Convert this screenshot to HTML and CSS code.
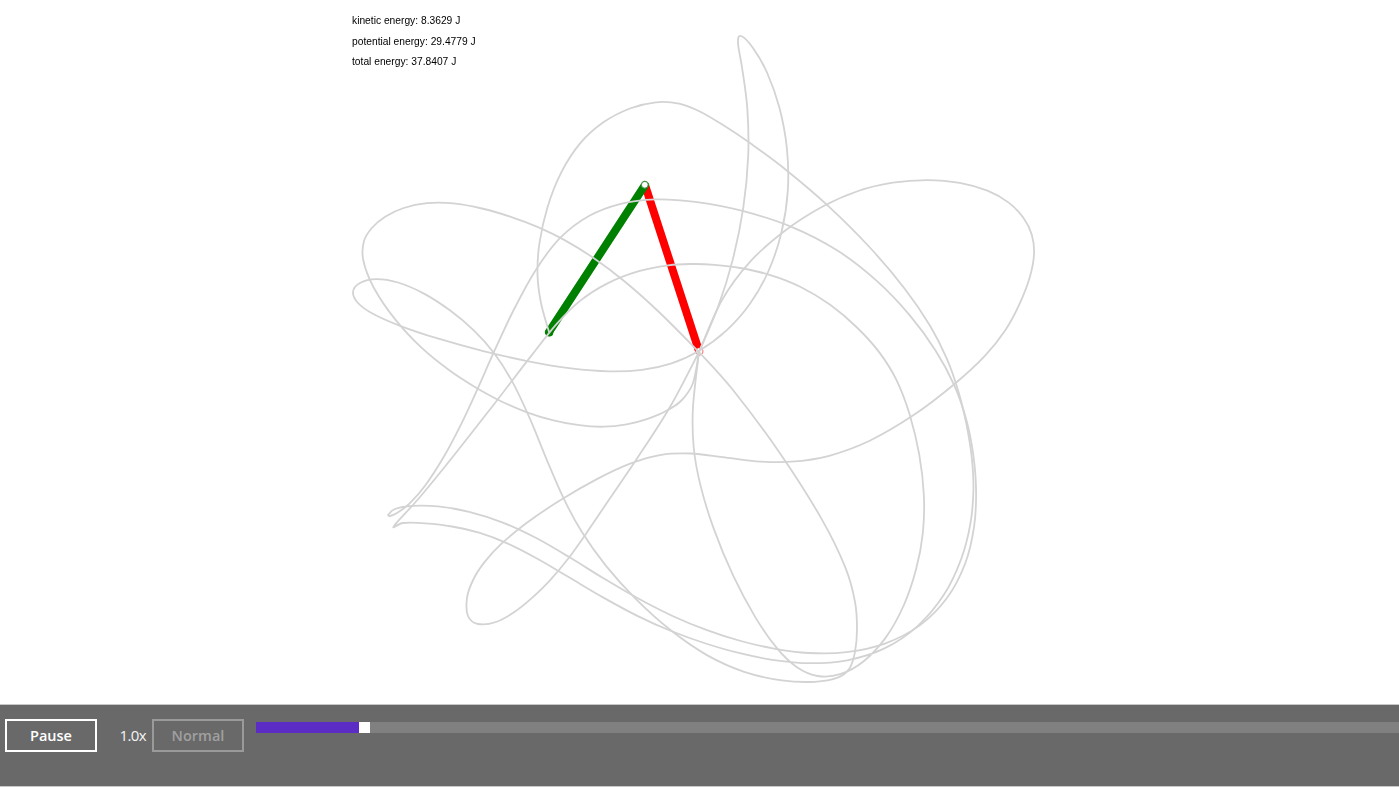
FILE: index.html
```html
<!DOCTYPE html>
<html lang="en">
<head>
<meta charset="utf-8">
<title>Double pendulum</title>
<link rel="stylesheet" href="styles.css">
</head>
<body>
<main class="stage">
  <svg class="scene" viewBox="0 0 1399 704" width="1399" height="704" aria-hidden="true">
    <line class="rod rod-red" x1="645" y1="185" x2="699" y2="351"></line>
    <line class="rod rod-green" x1="645" y1="185" x2="549" y2="332"></line>
    <circle class="tip" cx="549.3" cy="332.5" r="4"></circle>
    <circle class="pivot" cx="699.3" cy="351.5" r="3.6"></circle>
    <g id="trail" class="trail"></g>
    <circle class="joint" cx="644.8" cy="184.8" r="3.4"></circle>
  </svg>
  <div class="energy">
    <p>kinetic energy: 8.3629 J</p>
    <p>potential energy: 29.4779 J</p>
    <p>total energy: 37.8407 J</p>
  </div>
</main>
<footer class="controls">
  <button class="btn btn-on" type="button">Pause</button>
  <span class="speed">1.0x</span>
  <button class="btn btn-off" type="button">Normal</button>
  <div class="slider">
    <div class="slider-fill"></div>
    <div class="slider-thumb"></div>
  </div>
</footer>
<script src="app.js"></script>
</body>
</html>
```
FILE: styles.css
```css
* { box-sizing: border-box; }
html, body { margin: 0; padding: 0; }
body {
  width: 1399px;
  height: 787px;
  overflow: hidden;
  background: #fff;
  display: flex;
  flex-direction: column;
}
.stage {
  position: relative;
  height: 704px;
  flex: none;
  padding: 15px 0 0 352px;
}
.scene {
  position: absolute;
  left: 0;
  top: 0;
  display: block;
  filter: blur(0.3px);
}
.energy {
  position: relative;
  font-family: "Liberation Sans", Arial, sans-serif;
  font-size: 10.25px;
  line-height: 12px;
  color: #000;
  filter: blur(0.3px);
}
.energy p { margin: 0 0 8.5px; }
.trail path {
  fill: none;
  stroke: #d3d3d3;
  stroke-width: 1.8;
  stroke-linejoin: round;
  stroke-linecap: round;
}
.rod { stroke-width: 8; stroke-linecap: round; }
.rod-red { stroke: #ff0000; stroke-linecap: butt; }
.rod-green { stroke: #008000; }
.tip { fill: #008000; }
.pivot { fill: #fff; stroke: #ff5050; stroke-width: 1; stroke-dasharray: 2.5 1.5; }
.joint { fill: #fff; stroke: #3d8f3d; stroke-width: 1; }
.controls {
  flex: none;
  height: 83px;
  background: #696969;
  border-top: 1px solid #c8c8c8;
  border-bottom: 1px solid #c8c8c8;
  display: flex;
  align-items: flex-start;
  padding: 14px 0 0 5px;
  font-family: "Open Sans", "Noto Sans", sans-serif;
}
.btn {
  width: 92px;
  height: 33px;
  margin: 0;
  padding: 0;
  background: transparent;
  font-family: inherit;
  font-size: 14.5px;
  font-weight: 600;
  line-height: 29px;
}
.btn-on { border: 2px solid #fff; color: #fff; }
.btn-off { border: 2px solid #9a9a9a; color: #a0a0a0; }
.speed {
  width: 55px;
  padding-right: 6px;
  text-align: right;
  font-size: 15px;
  font-weight: 400;
  letter-spacing: -0.6px;
  line-height: 33px;
  color: #f4f4f4;
}
.slider {
  flex: 1;
  height: 11px;
  margin: 3px 0 0 12px;
  background: #808080;
  display: flex;
}
.slider-fill { width: 103px; background: #5b2dc4; }
.slider-thumb { width: 11px; background: #fff; }
```
FILE: app.js
```js
var trails = [
  [[549,332],[541,303],[538,273],[539,247],[547,207],[562,170],[580,143],[603,123],[630,108],[657,102],[680,104],[700,111],[723,127],[750,143],[787,170],[827,205],[870,247],[907,290],[930,327],[947,360],[957,387],[967,427],[972,460],[972.5,490],[971,523],[961,560],[944,593],[920,627],[883,650],[847,660],[810,663],[773,660],[740,653],[707,643],[670,632],[637,615],[603,598],[570,578],[537,558],[505,542],[480,533],[453,527],[427,523],[403,523],[394,526],[420,497],[453,457],[497,400],[537,350],[553,327],[580,303],[603,283],[640,270],[673,265],[690,266],[713,264],[740,268],[770,275],[800,287],[830,303],[857,327],[883,360],[893,373],[910,413],[920,457],[924,497],[922,533],[917,567],[903,607],[887,637],[863,663],[840,673],[817,677],[797,667],[777,647],[757,620],[733,577],[713,527],[700,483],[695,447],[693,407],[699,352]],
  [[699,352],[733,390],[787,460],[823,520],[847,573],[853,597],[857,628],[855,653],[847,670],[840,675],[817,682],[782,682],[740,670],[710,657],[670,630],[637,600],[603,563],[583,533],[563,497],[547,463],[530,417],[513,380],[493,353],[473,330],[453,313],[423,292],[397,282],[377,279],[360,283],[353,292],[358,303],[373,313],[397,325],[440,340],[483,350],[530,362],[570,368],[610,372],[643,369],[670,363],[699,352],[727,330],[750,303],[768,273],[782,233],[788,187],[787,153],[780,107],[767,70],[753,48],[741,36],[738,43],[743,70],[748,110],[749,153],[743,210],[733,260],[718,307],[699,352]],
  [[699,352],[722,300],[747,267],[783,230],[827,205],[857,192],[890,183],[930,180],[957,182],[990,192],[1008,202],[1023,217],[1032,237],[1034,253],[1030,278],[1020,303],[1000,337],[990,350],[957,382],[910,418],[870,442],[830,455],[790,462],[757,462],[723,457],[690,453],[660,454],[633,463],[597,480],[563,497],[520,528],[503,543],[485,562],[473,580],[467,598],[468,616],[478,624],[496,622],[513,612],[533,597],[550,580],[570,557],[585,535],[610,497],[637,457],[670,407],[699,352]],
  [[699,352],[693,383],[680,400],[667,410],[647,418],[627,425],[603,427],[580,425],[553,420],[528,413],[498,400],[477,388],[447,367],[423,350],[397,323],[370,283],[363,260],[365,243],[372,228],[385,217],[403,208],[428,203],[453,203],[480,208],[513,218],[540,228],[560,238],[597,260],[623,280],[660,313],[699,352]],
  [[388,515],[390,516],[397,513],[410,503],[425,488],[443,457],[463,422],[478,388],[493,353],[513,313],[537,267],[560,237],[587,217],[623,203],[657,200],[690,202],[743,211],[792,226],[837,250],[877,280],[910,317],[935,350],[955,385],[967,422],[973,457],[975,490],[974.5,527],[966,563],[947,598],[920,627],[887,643],[843,653],[810,653],[773,648],[740,640],[710,632],[670,615],[637,598],[603,578],[570,558],[537,538],[503,522],[470,512],[437,506],[413,506],[395,509],[388,515]]
];

function turn(a, b, c) {
  var u = Math.atan2(b[1] - a[1], b[0] - a[0]);
  var v = Math.atan2(c[1] - b[1], c[0] - b[0]);
  var d = Math.abs(u - v);
  return d > Math.PI ? 2 * Math.PI - d : d;
}

/* Fair out tracing noise without shrinking the arcs; sharp corners stay put. */
function fair(p, rounds) {
  var limit = 45 * Math.PI / 180;
  for (var r = 0; r < rounds; r++) {
    var out = p.map(function (q) { return q.slice(); });
    for (var i = 2; i < p.length - 2; i++) {
      var sharp = false;
      for (var j = i - 1; j <= i + 1; j++) {
        if (turn(p[j - 1], p[j], p[j + 1]) > limit) sharp = true;
      }
      if (sharp) continue;
      for (var k = 0; k < 2; k++) {
        var target = (-p[i - 2][k] + 4 * p[i - 1][k] + 4 * p[i + 1][k] - p[i + 2][k]) / 6;
        out[i][k] = p[i][k] + 0.5 * (target - p[i][k]);
      }
    }
    p = out;
  }
  return p;
}

function smoothPath(p) {
  var d = "M" + p[0][0].toFixed(1) + " " + p[0][1].toFixed(1);
  for (var i = 0; i < p.length - 1; i++) {
    var a = p[Math.max(i - 1, 0)], b = p[i], c = p[i + 1], e = p[Math.min(i + 2, p.length - 1)];
    d += "C" + (b[0] + (c[0] - a[0]) / 6).toFixed(1) + " " + (b[1] + (c[1] - a[1]) / 6).toFixed(1) + " " +
      (c[0] - (e[0] - b[0]) / 6).toFixed(1) + " " + (c[1] - (e[1] - b[1]) / 6).toFixed(1) + " " + c[0].toFixed(1) + " " + c[1].toFixed(1);
  }
  return d;
}

var group = document.getElementById("trail");
trails.forEach(function (t) {
  var el = document.createElementNS("http://www.w3.org/2000/svg", "path");
  el.setAttribute("d", smoothPath(fair(t, 3)));
  group.appendChild(el);
});
```
